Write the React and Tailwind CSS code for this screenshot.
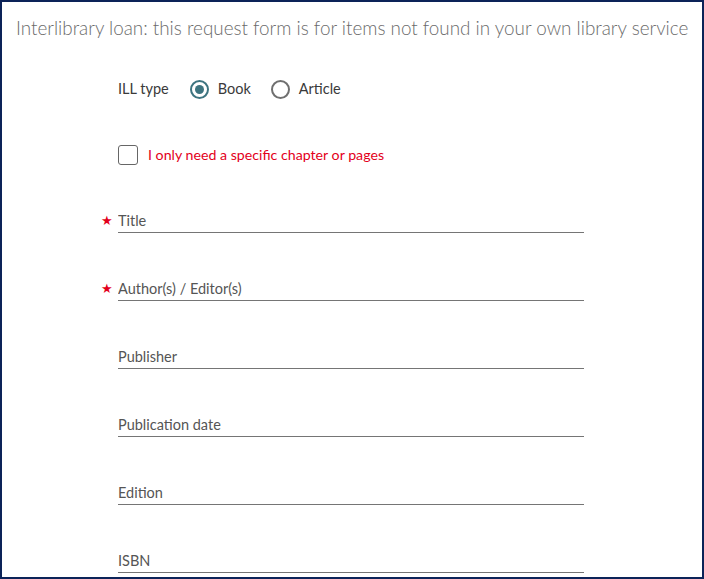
import React, { useState } from "react";

const fields = [
  { label: "Title", required: true },
  { label: "Author(s) / Editor(s)", required: true },
  { label: "Publisher" },
  { label: "Publication date" },
  { label: "Edition" },
  { label: "ISBN" },
];

const Radio = ({ checked, label, onClick }) => (
  <button type="button" onClick={onClick} className="flex items-center gap-[9px]">
    <span
      className={
        "flex h-[19px] w-[19px] items-center justify-center rounded-full border-2 " +
        (checked ? "border-[#3d7480]" : "border-[#6f6f6f]")
      }
    >
      {checked && <span className="h-[9px] w-[9px] rounded-full bg-[#3d7480]" />}
    </span>
    <span className="text-[14.5px] text-[#3a3a3a]">{label}</span>
  </button>
);

export default function App() {
  const [type, setType] = useState("book");
  const [chapter, setChapter] = useState(false);

  return (
    <div
      className="h-[579px] w-[704px] overflow-hidden border-2 border-[#0c2358] bg-white"
      style={{ fontFamily: "Lato, 'Liberation Sans', sans-serif" }}
    >
      {/* Heading */}
      <h1 className="whitespace-nowrap pl-[14px] pt-[12px] text-[18.85px] leading-[28px] font-light text-[#6b6b6b]">
        Interlibrary loan: this request form is for items not found in your own library service
      </h1>

      <div className="w-[582px] pl-[116px]">
        {/* ILL type */}
        <div className="mt-[35px] flex h-[24px] items-center">
          <span className="mr-[21px] text-[14.5px] text-[#3a3a3a]">ILL type</span>
          <div className="flex items-center gap-[20px]">
            <Radio checked={type === "book"} label="Book" onClick={() => setType("book")} />
            <Radio checked={type === "article"} label="Article" onClick={() => setType("article")} />
          </div>
        </div>

        {/* Chapter checkbox */}
        <label className="mt-[42px] flex h-[24px] cursor-pointer items-center gap-[10px]">
          <input
            type="checkbox"
            checked={chapter}
            onChange={(e) => setChapter(e.target.checked)}
            className="h-[20px] w-[20px] appearance-none rounded-[3px] border border-[#666] bg-white"
          />
          <span className="text-[14.2px] text-[#e3001b]">I only need a specific chapter or pages</span>
        </label>

        {/* Text fields */}
        <div className="mt-[43px] flex flex-col gap-[45px]">
          {fields.map((f) => (
            <div key={f.label} className="relative border-b border-[#757575]">
              {f.required && (
                <span className="absolute left-[-17px] top-0 text-[13px] leading-[20px] text-[#e3001b]">
                  ★
                </span>
              )}
              <input
                type="text"
                placeholder={f.label}
                className="block h-[22px] w-full pb-[2px] text-[14.5px] leading-[20px] text-[#333] outline-none placeholder:text-[#555]"
              />
            </div>
          ))}
        </div>
      </div>
    </div>
  );
}
